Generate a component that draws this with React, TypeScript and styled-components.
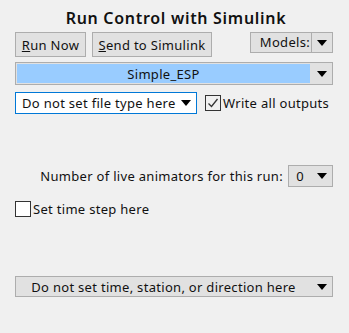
import styled, { createGlobalStyle, css } from 'styled-components';
import { FunctionComponent, ReactNode } from 'react';

const Global = createGlobalStyle`
    html, body {
        margin: 0;
        padding: 0;
        background: #f0f0f0;
    }
    body {
        font-family: 'Noto Sans', 'Open Sans', sans-serif;
        font-size: 13px;
        letter-spacing: 0.3px;
        color: #111;
    }
`;

const Panel = styled.div`
    width: 349px;
    height: 333px;
    box-sizing: border-box;
    padding: 7px 16px 0 15px;
    display: flex;
    flex-direction: column;
`;

const Title = styled.div`
    text-align: center;
    font-size: 16px;
    letter-spacing: 0.7px;
    font-weight: 600;
    height: 25px;
    line-height: 22px;
    padding-left: 4px;
`;

const ButtonRow = styled.div`
    display: flex;
    align-items: flex-start;
    gap: 6px;
`;

const Button = styled.button<{ $w: number }>`
    width: ${({ $w }) => $w}px;
    height: 25px;
    padding: 0;
    background: #e1e1e1;
    border: 1px solid #adadad;
    font: inherit;
    letter-spacing: inherit;
    color: inherit;
    line-height: 22px;
    cursor: default;
`;

const Spacer = styled.div<{ $h?: number; $w?: number }>`
    flex: 0 0 auto;
    height: ${({ $h }) => $h ?? 0}px;
    width: ${({ $w }) => $w ?? 0}px;
`;

const Arrow = styled.span`
    width: 0;
    height: 0;
    border-left: 5px solid transparent;
    border-right: 5px solid transparent;
    border-top: 6px solid #000;
`;

const ModelsButton = styled.div`
    height: 21px;
    width: 83px;
    box-sizing: border-box;
    display: flex;
    align-items: stretch;
    background: #e1e1e1;
    border: 1px solid #adadad;
    margin-left: auto;
`;

const ModelsLabel = styled.span`
    flex: 1;
    text-align: right;
    padding-right: 1px;
    line-height: 18px;
`;

const ModelsArrow = styled.span`
    width: 20px;
    border-left: 1px solid #adadad;
    display: flex;
    align-items: center;
    justify-content: center;
`;

type SelectKind = 'model' | 'focus' | 'plain';

const SelectBox = styled.div<{ $kind: SelectKind; $h: number }>`
    height: ${({ $h }) => $h}px;
    box-sizing: border-box;
    display: flex;
    align-items: stretch;
    border: 1px solid #adadad;
    background: #e1e1e1;

    ${({ $kind }) =>
        $kind === 'focus' &&
        css`
            border-color: #0078d7;
            background: #fff;
        `}
`;

const SelectValue = styled.span<{ $kind: SelectKind; $align: 'left' | 'center' }>`
    flex: 1;
    display: flex;
    align-items: center;
    justify-content: ${({ $align }) => ($align === 'center' ? 'center' : 'flex-start')};
    padding-left: ${({ $align }) => ($align === 'center' ? 0 : 6)}px;
    white-space: nowrap;

    ${({ $kind }) =>
        $kind === 'model' &&
        css`
            margin: 1px;
            background: #99ccff;
        `}
`;

const SelectArrow = styled.span<{ $w: number }>`
    width: ${({ $w }) => $w}px;
    display: flex;
    align-items: center;
    justify-content: center;
`;

interface SelectProps {
    kind: SelectKind;
    height: number;
    align?: 'left' | 'center';
    arrowWidth?: number;
    width?: number;
    children: ReactNode;
}

const Select: FunctionComponent<SelectProps> = ({ kind, height, align = 'center', arrowWidth = 21, width, children }) => (
    <SelectBox $kind={kind} $h={height} style={width ? { width } : undefined}>
        <SelectValue $kind={kind} $align={align}>
            {children}
        </SelectValue>
        <SelectArrow $w={arrowWidth}>
            <Arrow />
        </SelectArrow>
    </SelectBox>
);

const Row = styled.div`
    display: flex;
    align-items: center;
`;

const CheckLabel = styled.label`
    display: flex;
    align-items: center;
    gap: 2px;
    white-space: nowrap;
`;

const CheckBox = styled.span<{ $checked?: boolean }>`
    width: 16px;
    height: 16px;
    box-sizing: border-box;
    border: 1px solid #333;
    background: ${({ $checked }) => ($checked ? '#f0f0f0' : '#fff')};
    display: flex;
    align-items: center;
    justify-content: center;
`;

const Check: FunctionComponent = () => (
    <svg width="12" height="12" viewBox="0 0 12 12">
        <path d="M1.5 6.5 L4.5 9.5 L10.5 2" fill="none" stroke="#333" strokeWidth="1.3" />
    </svg>
);

const AnimRow = styled.div`
    display: flex;
    align-items: center;
    justify-content: flex-end;
    gap: 5px;
`;

export default function App() {
    return (
        <>
            <Global />
            <Panel>
                <Title>Run Control with Simulink</Title>
                <ButtonRow>
                    <Button $w={71}>
                        <u>R</u>un Now
                    </Button>
                    <Button $w={120}>
                        <u>S</u>end to Simulink
                    </Button>
                    <ModelsButton>
                        <ModelsLabel>Models:</ModelsLabel>
                        <ModelsArrow>
                            <Arrow />
                        </ModelsArrow>
                    </ModelsButton>
                </ButtonRow>
                <Spacer $h={5} />
                <Select kind="model" height={23}>
                    Simple_ESP
                </Select>
                <Spacer $h={7} />
                <Row>
                    <Select kind="focus" height={22} align="left" width={182}>
                        Do not set file type here
                    </Select>
                    <Spacer $w={8} />
                    <CheckLabel>
                        <CheckBox $checked>
                            <Check />
                        </CheckBox>
                        Write all outputs
                    </CheckLabel>
                </Row>
                <Spacer $h={51} />
                <AnimRow>
                    <span>Number of live animators for this run:</span>
                    <Select kind="plain" height={22} width={45}>
                        0
                    </Select>
                </AnimRow>
                <Spacer $h={13} />
                <CheckLabel>
                    <CheckBox />
                    Set time step here
                </CheckLabel>
                <Spacer $h={58} />
                <Select kind="plain" height={21}>
                    Do not set time, station, or direction here
                </Select>
            </Panel>
        </>
    );
}
